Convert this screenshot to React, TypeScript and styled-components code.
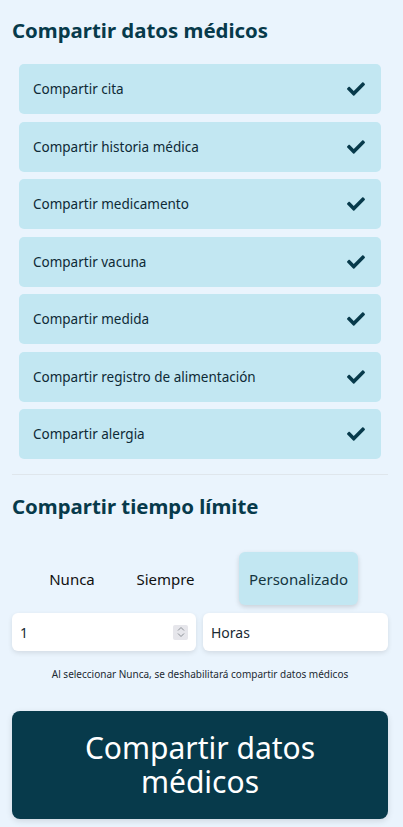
import React, { useState } from 'react';
import styled, { createGlobalStyle } from 'styled-components';
import { FaCheck } from 'react-icons/fa';

const GlobalStyle = createGlobalStyle`
  body {
    margin: 0;
    background: #eaf4fd;
    font-family: 'Noto Sans', 'Open Sans', sans-serif;
    color: #0b3445;
  }
`;

const items = [
  'Compartir cita',
  'Compartir historia médica',
  'Compartir medicamento',
  'Compartir vacuna',
  'Compartir medida',
  'Compartir registro de alimentación',
  'Compartir alergia',
];

const tabs = [
  { label: 'Nunca', width: 92 },
  { label: 'Siempre', width: 95 },
  { label: 'Personalizado', width: 119 },
];

const App = () => {
  const [active, setActive] = useState('Personalizado');

  return (
    <Page>
      <GlobalStyle />
      <Title>Compartir datos médicos</Title>
      <List>
        {items.map((item) => (
          <Item key={item}>
            <span>{item}</span>
            <CheckIcon />
          </Item>
        ))}
      </List>
      <Divider />
      <SubTitle>Compartir tiempo límite</SubTitle>
      <Tabs>
        {tabs.map((t) => (
          <Tab
            key={t.label}
            $width={t.width}
            $active={active === t.label}
            onClick={() => setActive(t.label)}
          >
            {t.label}
          </Tab>
        ))}
      </Tabs>
      <Inputs>
        <Field>
          <span>1</span>
          <Spinner>
            <svg width="8" height="12" viewBox="0 0 8 12" fill="none" stroke="#8a8f95" strokeWidth="1">
              <path d="M1 4.5 L4 1.5 L7 4.5" />
              <path d="M1 7.5 L4 10.5 L7 7.5" />
            </svg>
          </Spinner>
        </Field>
        <Field>
          <span>Horas</span>
        </Field>
      </Inputs>
      <Hint>Al seleccionar Nunca, se deshabilitará compartir datos médicos</Hint>
      <ShareButton>Compartir datos médicos</ShareButton>
    </Page>
  );
};

const Page = styled.div`
  padding: 17px 15px 9px 12px;
`;

const Title = styled.h1`
  margin: 0 0 21px;
  font-size: 20.4px;
  font-weight: 700;
  line-height: 26px;
  color: #073a4b;
`;

const List = styled.div`
  display: flex;
  flex-direction: column;
  gap: 7.5px;
  padding: 0 7px;
`;

const Item = styled.div`
  height: 50px;
  display: flex;
  align-items: center;
  justify-content: space-between;
  padding: 0 14px;
  background: #c2e7f2;
  border-radius: 5px;
  font-size: 13.5px;
  color: #0e2a36;
`;

const CheckIcon = styled(FaCheck)`
  width: 22px;
  height: 18px;
  color: #073a4b;
`;

const Divider = styled.hr`
  margin: 15px 0 0;
  border: none;
  border-top: 1px solid #dfe6ec;
`;

const SubTitle = styled.h2`
  margin: 18px 0 0;
  font-size: 20.4px;
  font-weight: 700;
  line-height: 26px;
  color: #073a4b;
`;

const Tabs = styled.div`
  display: flex;
  align-items: center;
  margin-top: 33px;
  padding-left: 14px;
`;

const Tab = styled.button<{ $active: boolean; $width: number }>`
  width: ${({ $width }) => $width}px;
  height: 53px;
  margin-left: ${({ $active }) => ($active ? '26px' : '0')};
  padding: 0;
  border: none;
  border-radius: 6px;
  font-family: inherit;
  font-size: 15px;
  color: ${({ $active }) => ($active ? '#14353f' : '#101010')};
  background: ${({ $active }) => ($active ? '#c2e7f2' : 'transparent')};
  box-shadow: ${({ $active }) => ($active ? '0 2px 5px rgba(0, 0, 0, 0.15)' : 'none')};
  cursor: pointer;
`;

const Inputs = styled.div`
  display: grid;
  grid-template-columns: 184px 1fr;
  gap: 7px;
  margin-top: 8px;
`;

const Field = styled.div`
  height: 38px;
  display: flex;
  align-items: center;
  justify-content: space-between;
  padding: 0 8px;
  background: #ffffff;
  border-radius: 6px;
  box-shadow: 0 2px 5px rgba(0, 0, 0, 0.1);
  font-size: 14px;
  color: #1a2a33;
`;

const Spinner = styled.div`
  width: 15px;
  height: 15px;
  display: flex;
  align-items: center;
  justify-content: center;
  background: #e6e6eb;
  border-radius: 2px;
`;

const Hint = styled.p`
  margin: 16px 0 0;
  text-align: center;
  font-size: 10px;
  color: #1c2a33;
`;

const ShareButton = styled.button`
  width: 100%;
  height: 108px;
  margin-top: 30px;
  padding: 0 50px;
  border: none;
  border-radius: 8px;
  background: #073a4b;
  color: #ffffff;
  font-family: inherit;
  font-size: 30px;
  line-height: 34px;
  box-shadow: 0 2px 6px rgba(0, 0, 0, 0.12);
  cursor: pointer;
`;

export default App;
